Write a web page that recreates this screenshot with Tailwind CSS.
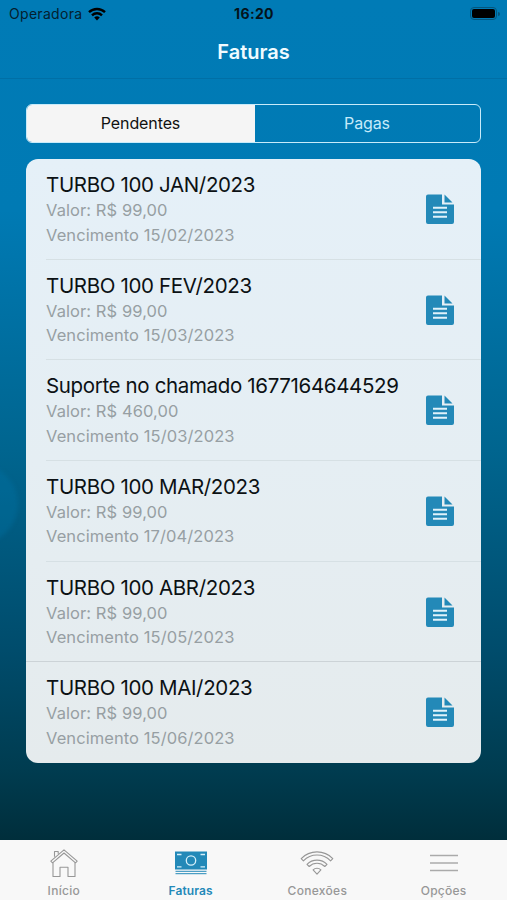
<!DOCTYPE html>
<html lang="pt-BR">

<head>
    <meta charset="UTF-8" />
    <meta name="viewport" content="width=device-width, initial-scale=1.0" />
    <title>Faturas</title>
    <script src="https://cdn.jsdelivr.net/npm/@tailwindcss/browser@4"></script>
</head>

<body class="h-[900px] overflow-hidden font-['Inter','Liberation_Sans',sans-serif]">

    <div class="relative flex h-[900px] w-full flex-col overflow-hidden bg-[linear-gradient(180deg,#007bb6_0px,#007ab4_210px,#00658f_450px,#004c6c_650px,#003c50_770px,#002e3b_840px)]">
        <!-- background bubble -->
        <div class="absolute -left-[62px] top-[464px] size-[80px] rounded-full bg-[#0078ad]/30 blur-[2px]"></div>

        <!-- status bar -->
        <div class="relative grid h-[27px] shrink-0 grid-cols-3 items-center pl-[9px] pr-[7px] text-[#04202e]">
            <div class="flex items-center gap-[6px]">
                <span class="text-[14px] tracking-[0.3px]">Operadora</span>
                <svg class="h-[14px] w-[18px] text-black" viewBox="0 0 18 14" fill="none" stroke="currentColor" stroke-width="2.4">
                    <path d="M1 5.2a11.5 11.5 0 0 1 16 0M4 8.3a7.2 7.2 0 0 1 10 0" />
                    <path d="M9 13.4 6.2 10.6a4 4 0 0 1 5.6 0z" fill="currentColor" stroke="none" />
                </svg>
            </div>
            <span class="pr-px text-center text-[14px] font-bold tracking-[0.35px] text-[#04131b]">16:20</span>
            <div class="flex items-center justify-end gap-px">
                <div class="h-[13px] w-[27px] rounded-[4px] border-[1.5px] border-[#04567d] p-px">
                    <div class="h-full rounded-[2px] bg-black"></div>
                </div>
                <div class="h-1 w-[2px] rounded-r-full bg-[#04567d]"></div>
            </div>
        </div>

        <!-- title -->
        <div class="relative flex h-[52px] shrink-0 items-center justify-center border-b border-[#006fa6] pb-[2px]">
            <h1 class="text-[20px] font-semibold tracking-[0px] text-[#f0fbff]">Faturas</h1>
        </div>

        <!-- tabs -->
        <div class="relative mx-[26px] mt-[25px] flex h-[39px] shrink-0 overflow-hidden rounded-[6px] border-[1.5px] border-[#c8ebfa] text-[16px]">
            <button class="-m-px w-[229px] bg-[#f5f5f5] pb-px tracking-[-0.1px] text-[#111]">Pendentes</button>
            <button class="flex-1 pb-px tracking-[-0.1px] text-[#c5eafa]">Pagas</button>
        </div>

        <!-- invoices -->
        <div id="invoiceList" class="relative mx-[26px] mt-4 h-[603.500px] shrink-0 overflow-hidden rounded-[12px] bg-[linear-gradient(180deg,#e5f0f8_0%,#e5eef3_50%,#e5ebed_100%)]"></div>

        <!-- tab bar -->
        <nav class="absolute inset-x-0 bottom-0 grid h-[60px] grid-cols-4 bg-[#f8f8f8] text-center text-[12px] font-medium text-[#979797]">
            <a class="flex flex-col items-center pl-px pt-[8px]">
                <svg class="h-[31px] w-[30px]" viewBox="0 0 30 31" fill="none" stroke="currentColor" stroke-width="1.1" stroke-linejoin="round">
                    <path d="M5.5 8.8V3.5h3.7v2.3M15 1.8 1.8 13.2l1.7 1.6L15 5l11.500 9.800 1.700-1.600z" />
                    <path d="M4 14.500V28.500h7V19.200h8v9.300h7V14.500" />
                </svg>
                <span class="mt-[4px] leading-4 tracking-[0.3px]">Início</span>
            </a>
            <a class="flex flex-col items-center pl-px pt-[8px] text-[#2389b8]">
                <svg class="h-[31px] w-[34px]" viewBox="0 0 34 31" fill="none">
                    <path d="M1 3.500H33V21.500H1z" fill="currentColor" />
                    <path d="M1.500 23.300H32.500M1.500 25.700H32.500" stroke="currentColor" stroke-width="1" />
                    <g stroke="#d5f0fa" stroke-width="1.3">
                        <circle cx="17" cy="12.500" r="4.700" />
                        <path d="M3 6.500H7.500M26.500 6.500H31M3 18.800H7.500M26.500 18.800H31" />
                    </g>
                </svg>
                <span class="mt-[4px] font-semibold leading-4 tracking-[0.1px]">Faturas</span>
            </a>
            <a class="flex flex-col items-center pl-px pt-[8px]">
                <svg class="h-[31px] w-[34px]" viewBox="0 0 34 31" fill="none" stroke="currentColor" stroke-width="1.1" stroke-linejoin="round">
                    <path d="M1.200 10.600a22 22 0 0 1 31.600 0l-2.200 2.200a19 19 0 0 0-27.200 0z" />
                    <path d="M7 16.300a14 14 0 0 1 20 0l-2.200 2.200a11 11 0 0 0-15.600 0z" />
                    <path d="M13.100 21.800a5.600 5.600 0 0 1 7.800 0L17 26.200z" />
                </svg>
                <span class="mt-[4px] leading-4 tracking-[0.3px]">Conexões</span>
            </a>
            <a class="flex flex-col items-center pt-[8px]">
                <svg class="h-[31px] w-[30px]" viewBox="0 0 30 31" stroke="#aaa" stroke-width="1.600">
                    <path d="M1 7.500H29M1 15H29M1 22.500H29" />
                </svg>
                <span class="mt-[4px] leading-4 tracking-[0.25px]">Opções</span>
            </a>
        </nav>
    </div>

    <script>
        const invoices = [
            { title: "TURBO 100 JAN/2023", value: "99,00", due: "15/02/2023" },
            { title: "TURBO 100 FEV/2023", value: "99,00", due: "15/03/2023" },
            { title: "Suporte no chamado 1677164644529", value: "460,00", due: "15/03/2023" },
            { title: "TURBO 100 MAR/2023", value: "99,00", due: "17/04/2023" },
            { title: "TURBO 100 ABR/2023", value: "99,00", due: "15/05/2023" },
            { title: "TURBO 100 MAI/2023", value: "99,00", due: "15/06/2023" }
        ];

        const invoiceList = document.getElementById("invoiceList");
        invoices.forEach((invoice, i) => {
            // the last separator runs the full width of the card
            let line = "ml-5 h-px bg-[#d6e0e4]";
            if (i === invoices.length - 2) line = "h-px bg-[#ccd3d7]";
            if (i === invoices.length - 1) line = "hidden";

            invoiceList.insertAdjacentHTML("beforeend", `
                <div class="flex h-[100.65px] flex-col justify-between">
                    <div class="flex justify-between pl-5 pr-[26px] pt-[13px]">
                        <div class="whitespace-nowrap">
                            <p class="text-[20.5px] leading-[26px] tracking-[-0.35px] text-[#0c1114]">${invoice.title}</p>
                            <p class="text-[16.5px] leading-[24.500px] tracking-[0.08px] text-[#979fa3]">Valor: R$ ${invoice.value}</p>
                            <p class="text-[16.5px] leading-[24.500px] tracking-[0.08px] text-[#979fa3]">Vencimento ${invoice.due}</p>
                        </div>
                        <svg class="mt-[22px] h-[31px] w-[30px]" viewBox="0 0 30 31" fill="#2389b8">
                            <path d="M3 .500H17V10.500H29V28a2 2 0 0 1-2 2H3a2 2 0 0 1-2-2V2.500a2 2 0 0 1 2-2z" />
                            <path d="M19.500 .500 27.500 8.500H19.500z" />
                            <path d="M8 13.700H22M8 18.200H22M8 22.800H22" stroke="#e0f2fa" stroke-width="2" />
                        </svg>
                    </div>
                    <div class="${line}"></div>
                </div>`);
        });
    </script>
</body>

</html>
